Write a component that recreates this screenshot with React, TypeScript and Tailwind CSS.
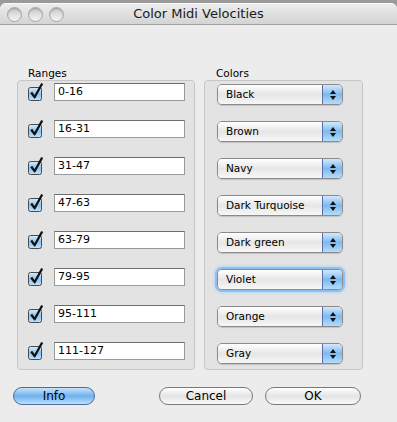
import React from 'react';

const ranges = ['0-16', '16-31', '31-47', '47-63', '63-79', '79-95', '95-111', '111-127'];
const colors = ['Black', 'Brown', 'Navy', 'Dark Turquoise', 'Dark green', 'Violet', 'Orange', 'Gray'];

const font = { fontFamily: '"DejaVu Sans", "Liberation Sans", sans-serif' };

function Checkbox() {
  return (
    <svg width="18" height="20" viewBox="0 0 18 20" className="shrink-0">
      <defs>
        <linearGradient id="cb" x1="0" y1="0" x2="0" y2="1">
          <stop offset="0" stopColor="#d8ecfc" />
          <stop offset="0.5" stopColor="#8cc4f3" />
          <stop offset="1" stopColor="#bfe2fd" />
        </linearGradient>
      </defs>
      <rect x="0.5" y="5.5" width="13" height="13" rx="2" fill="url(#cb)" stroke="#4a4a4a" />
      <path d="M3.2 10.5 L6.6 15.2 L14.2 1.5" fill="none" stroke="#111" strokeWidth="2.3" strokeLinejoin="round" />
    </svg>
  );
}

function Popup({ label, focused }: { label: string; focused?: boolean }) {
  return (
    <div
      className={`flex h-[21px] w-[126px] rounded-[5px] border border-[#8a8a8a] overflow-hidden ${
        focused ? 'shadow-[0_0_0_2px_#8fbef0,0_0_3px_3px_#b8d6f5]' : 'shadow-[0_1px_1px_rgba(0,0,0,0.15)]'
      }`}
    >
      <div className="flex-1 flex items-center pl-[8px] text-[10.5px] text-black bg-gradient-to-b from-[#ffffff] via-[#e6e6e6] to-[#f7f7f7]">
        {label}
      </div>
      <div className="w-[20px] flex flex-col items-center justify-center gap-[2px] border-l border-[#5a6ea8] bg-gradient-to-b from-[#d3e9fc] via-[#7db9ef] to-[#b5dcfb]">
        <svg width="6" height="4" viewBox="0 0 6 4"><path d="M3 0 L6 4 L0 4 Z" fill="#111" /></svg>
        <svg width="6" height="4" viewBox="0 0 6 4"><path d="M0 0 L6 0 L3 4 Z" fill="#111" /></svg>
      </div>
    </div>
  );
}

export default function App() {
  return (
    <div className="w-[397px] h-[422px] bg-[#9a9a9a] overflow-hidden" style={font}>
      <div className="mt-[3px] h-[419px] rounded-t-[6px] bg-[#ececec] overflow-hidden flex flex-col">
        {/* title bar */}
        <div className="relative h-[22px] shrink-0 border-t border-[#fafafa] border-b border-b-[#a2a2a2] bg-gradient-to-b from-[#ececec] to-[#d4d4d4] flex items-center justify-center">
          <div className="absolute left-[7px] top-[3px] flex gap-[6px]">
            {[0, 1, 2].map((i) => (
              <div
                key={i}
                className="w-[15px] h-[15px] rounded-full border border-[#a6a6a6] bg-gradient-to-b from-[#c4c4c4] via-[#e0e0e0] to-[#f4f4f4] shadow-[inset_0_1px_1px_rgba(0,0,0,0.2)]"
              />
            ))}
          </div>
          <span className="text-[13px] text-[#1a1a1a]">Color Midi Velocities</span>
        </div>

        {/* groups */}
        <div className="mt-[42px] flex gap-[9px] pl-[17px]">
          <div className="w-[178px] flex flex-col">
            <div className="pl-[11px] h-[13px] text-[10.5px] leading-[13px] text-black">Ranges</div>
            <div className="h-[290px] rounded-[4px] border border-[#c6c6c6] bg-[#e3e3e3] pt-[2px] pl-[10px] flex flex-col gap-[19px]">
              {ranges.map((r) => (
                <div key={r} className="flex items-end gap-[8px] h-[18px]">
                  <div className="-mb-[1px]">
                    <Checkbox />
                  </div>
                  <div className="w-[131px] h-[18px] bg-white border border-[#9a9a9a] border-t-[#6e6e6e] pl-[3px] text-[11px] leading-[16px] text-black">
                    {r}
                  </div>
                </div>
              ))}
            </div>
          </div>
          <div className="w-[159px] flex flex-col">
            <div className="pl-[12px] h-[13px] text-[10.5px] leading-[13px] text-black">Colors</div>
            <div className="h-[290px] rounded-[4px] border border-[#c6c6c6] bg-[#e3e3e3] pt-[3px] pl-[12px] flex flex-col gap-[16px]">
              {colors.map((c) => (
                <Popup key={c} label={c} focused={c === 'Violet'} />
              ))}
            </div>
          </div>
        </div>

        {/* buttons */}
        <div className="mt-[17px] flex text-[12px] text-black">
          <button className="ml-[13px] w-[82px] h-[18px] rounded-full border border-[#4e6a9e] bg-gradient-to-b from-[#c9e4fb] via-[#6fb1ee] to-[#b9e0fd] leading-[16px]">
            Info
          </button>
          <button className="ml-[64px] w-[94px] h-[18px] rounded-full border border-[#7a7a7a] bg-gradient-to-b from-[#ffffff] via-[#e4e4e4] to-[#fafafa] leading-[16px]">
            Cancel
          </button>
          <button className="ml-[12px] w-[96px] h-[18px] rounded-full border border-[#7a7a7a] bg-gradient-to-b from-[#ffffff] via-[#e4e4e4] to-[#fafafa] leading-[16px]">
            OK
          </button>
        </div>
      </div>
    </div>
  );
}
